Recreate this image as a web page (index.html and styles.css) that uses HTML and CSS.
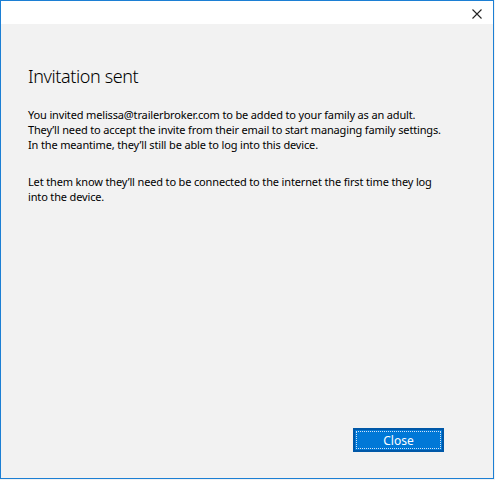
FILE: index.html
```html
<!DOCTYPE html>
<html>
<head>
<meta charset="utf-8">
<link rel="stylesheet" href="styles.css">
</head>
<body>
<div class="window">
  <div class="titlebar">
    <button class="close-x" aria-label="Close">
      <svg width="10" height="10" viewBox="0 0 10 10"><path d="M0.5 0.5 L9.5 9.5 M9.5 0.5 L0.5 9.5" stroke="#222" stroke-width="1.1" fill="none"/></svg>
    </button>
  </div>
  <div class="content">
    <h1 class="heading">Invitation sent</h1>
    <p class="para">You invited melissa@trailerbroker.com to be added to your family as an adult.<br>They’ll need to accept the invite from their email to start managing family settings.<br>In the meantime, they’ll still be able to log into this device.</p>
    <p class="para">Let them know they’ll need to be connected to the internet the first time they log<br>into the device.</p>
    <div class="footer">
      <button class="primary"><span class="focus">Close</span></button>
    </div>
  </div>
</div>
</body>
</html>
```

FILE: styles.css
```css
html, body {
  margin: 0;
  padding: 0;
  background: #f2f2f2;
}
.window {
  box-sizing: border-box;
  width: 494px;
  height: 479px;
  border: 1px solid #1c7fd4;
  display: flex;
  flex-direction: column;
  font-family: "Noto Sans", "Liberation Sans", sans-serif;
  color: #000;
}
.titlebar {
  height: 23px;
  background: #fff;
  display: flex;
  justify-content: flex-end;
  align-items: center;
}
.close-x {
  border: 0;
  background: transparent;
  padding: 0;
  width: 10px;
  height: 10px;
  margin-right: 11px;
  margin-top: 2px;
  display: flex;
}
.content {
  flex: 1;
  background: #f2f2f2;
  display: flex;
  flex-direction: column;
  padding: 0 49px 26px 27px;
}
.heading {
  font-weight: 300;
  font-size: 18px;
  letter-spacing: -0.4px;
  line-height: 26px;
  margin: 39px 0 0 0;
  color: #000;
}
.para {
  font-size: 11px;
  line-height: 15px;
  margin: 18px 0 0 0;
  letter-spacing: -0.15px;
  white-space: nowrap;
}
.para + .para {
  margin-top: 22px;
}
.footer {
  margin-top: auto;
  display: flex;
  justify-content: flex-end;
}
.primary {
  width: 91px;
  height: 24px;
  box-sizing: border-box;
  background: #0078d7;
  border: 2px solid #0058a8;
  padding: 1px;
  display: flex;
  font-family: "Noto Sans", "Liberation Sans", sans-serif;
}
.focus {
  flex: 1;
  border: 1px dotted #cfe3f7;
  color: #fff;
  font-size: 12px;
  display: flex;
  align-items: center;
  justify-content: center;
}
```
